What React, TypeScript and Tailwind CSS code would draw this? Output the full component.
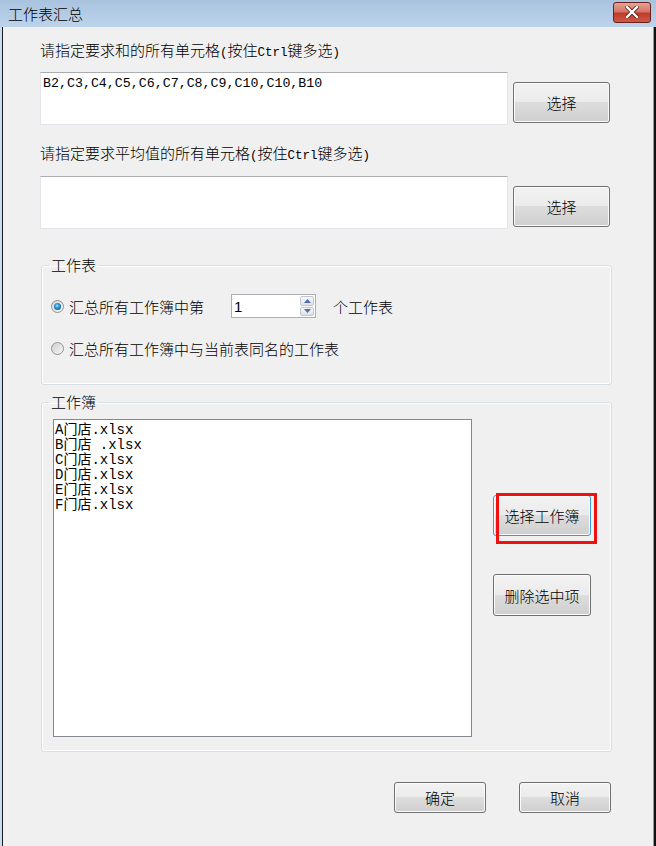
import type { ReactNode } from "react"

const btnBase =
  "flex items-center justify-center rounded-[3px] border bg-[linear-gradient(#f2f2f2,#ebebeb_50%,#dddddd_50%,#cfcfcf)] shadow-[inset_0_0_0_1px_#fbfbfb] text-[15px] font-light leading-none text-black"

function WinButton({ children, className = "", focused = false }: { children: ReactNode; className?: string; focused?: boolean }) {
  return (
    <button className={`${btnBase} ${focused ? "border-[#3c9bd6] shadow-[inset_0_0_0_1px_#a9dcf6]" : "border-[#707070]"} ${className}`}>
      {children}
    </button>
  )
}

function Radio({ checked }: { checked?: boolean }) {
  return (
    <span className="flex h-[13px] w-[13px] items-center justify-center rounded-full border border-[#8e8f8f] bg-[linear-gradient(135deg,#d6d6d6,#f8f8f8)]">
      {checked ? (
        <span className="h-[7px] w-[7px] rounded-full bg-[radial-gradient(circle_at_45%_40%,#a8e4ff_0,#2b9ad6_35%,#0a4c86_90%)]" />
      ) : (
        <span className="h-[9px] w-[9px] rounded-full bg-[linear-gradient(135deg,#cfcfcf,#f4f4f4)]" />
      )}
    </span>
  )
}

function TextBox({ children }: { children?: ReactNode }) {
  return (
    <div className="h-[53px] w-[468px] border border-[#e2e6ea] border-t-[#abadb3] bg-white pl-[2px] pt-[3px] font-['Liberation_Mono','Noto_Sans_CJK_SC',monospace] text-[13.3px] leading-[15px] text-black">
      {children}
    </div>
  )
}

// half-width latin runs in the labels are monospaced
function Mono({ children }: { children: ReactNode }) {
  return <span className="font-['Liberation_Mono',monospace] text-[12.5px] leading-none">{children}</span>
}

function CellLabel({ what }: { what: string }) {
  return (
    <div className="ml-[37px] h-[18px] whitespace-nowrap text-[15px] font-light leading-[18px]">
      请指定要求{what}的所有单元格<Mono>(</Mono>按住<Mono>Ctrl</Mono>键多选<Mono>)</Mono>
    </div>
  )
}

const files = ["A门店.xlsx", "B门店 .xlsx", "C门店.xlsx", "D门店.xlsx", "E门店.xlsx", "F门店.xlsx"]

export default function App() {
  return (
    <div className="flex h-[846px] w-[656px] flex-col overflow-hidden bg-[#f0f0f0] font-['Noto_Sans_CJK_SC',sans-serif] text-black">
      {/* title bar */}
      <div className="flex h-[27px] shrink-0 items-center bg-[linear-gradient(#a9c3df,#bcd3eb)]">
        <span className="pl-[8px] text-[15px] font-light leading-none">工作表汇总</span>
        <div className="ml-auto mr-[5px] mt-[-3px] flex h-[21px] w-[38px] items-center justify-center rounded-[3px] border border-[#6a2119] bg-[linear-gradient(#e6a497,#d47565_45%,#c13c2b_55%,#cb5a48)]">
          <svg width="14" height="12" viewBox="0 0 14 12">
            <path d="M2 1 L12 11 M12 1 L2 11" stroke="#5a2019" strokeWidth="4" strokeLinecap="square" />
            <path d="M2 1 L12 11 M12 1 L2 11" stroke="#ffffff" strokeWidth="2.4" strokeLinecap="square" />
          </svg>
        </div>
      </div>

      <div className="flex flex-1">
        <div className="w-[2px] bg-[#c9dbee]" />
        <div className="w-[1px] bg-[#1b1b1b]" />

        <div className="flex w-[650px] flex-col">
          <div className="mt-[14px]">
            <CellLabel what="和" />
          </div>
          <div className="ml-[37px] mt-[13px] flex items-start gap-[5px]">
            <TextBox>B2,C3,C4,C5,C6,C7,C8,C9,C10,C10,B10</TextBox>
            <WinButton className="mt-[10px] h-[41px] w-[97px]">选择</WinButton>
          </div>

          <div className="mt-[19px]">
            <CellLabel what="平均值" />
          </div>
          <div className="ml-[37px] mt-[14px] flex items-start gap-[5px]">
            <TextBox />
            <WinButton className="mt-[10px] h-[41px] w-[97px]">选择</WinButton>
          </div>

          {/* 工作表 group */}
          <fieldset className="ml-[38px] mt-[27px] w-[571px] rounded-[3px] border border-[#d5dfe5] pb-[27px] shadow-[inset_0_0_0_1px_#ffffff]">
            <legend className="ml-[7px] px-[2px] text-[15px] font-light leading-[18px]">工作表</legend>
            <div className="ml-[9px] mt-[20px] flex h-[24px] items-center">
              <Radio checked />
              <span className="ml-[5px] text-[15px] font-light leading-none">汇总所有工作簿中第</span>
              <div className="ml-[27px] flex h-[24px] w-[85px] items-center border border-[#abadb3] bg-white pr-[1px]">
                <span className="ml-[2px] font-['Liberation_Sans',sans-serif] text-[15px] leading-none">1</span>
                <div className="ml-auto flex h-[20px] w-[14px] flex-col gap-[1px]">
                  <div className="flex flex-1 items-center justify-center rounded-[2px] border border-[#c2c7cf] bg-[linear-gradient(#f6f7f9,#dde2e9)]">
                    <svg width="7" height="4" viewBox="0 0 7 4"><path d="M0 4 L3.5 0 L7 4 Z" fill="#4e6fae" /></svg>
                  </div>
                  <div className="flex flex-1 items-center justify-center rounded-[2px] border border-[#c2c7cf] bg-[linear-gradient(#f6f7f9,#dde2e9)]">
                    <svg width="7" height="4" viewBox="0 0 7 4"><path d="M0 0 L7 0 L3.5 4 Z" fill="#4e6fae" /></svg>
                  </div>
                </div>
              </div>
              <span className="ml-[17px] text-[15px] font-light leading-none">个工作表</span>
            </div>
            <div className="ml-[9px] mt-[21px] flex h-[18px] items-center">
              <Radio />
              <span className="ml-[5px] text-[15px] font-light leading-none">汇总所有工作簿中与当前表同名的工作表</span>
            </div>
          </fieldset>

          {/* 工作簿 group */}
          <fieldset className="ml-[38px] mt-[8px] w-[571px] rounded-[3px] border border-[#d5dfe5] pb-[14px] shadow-[inset_0_0_0_1px_#ffffff]">
            <legend className="ml-[7px] px-[2px] text-[15px] font-light leading-[18px]">工作簿</legend>
            <div className="ml-[11px] mt-[8px] flex items-start">
              <div className="h-[318px] w-[419px] border border-[#828790] bg-white pl-[1px] pt-[3px] font-['Liberation_Mono','Noto_Sans_CJK_SC',monospace] text-[14px] leading-[15px]">
                {files.map((f) => (
                  <div key={f} className="h-[15px] whitespace-pre">{f}</div>
                ))}
              </div>
              <div className="ml-[21px] flex flex-col">
                <div className="relative mt-[76px]">
                  <WinButton focused className="h-[41px] w-[98px]">选择工作簿</WinButton>
                  <div className="absolute left-[3px] top-[-2px] h-[51px] w-[101px] border-[3px] border-[#f01010]" />
                </div>
                <WinButton className="mt-[38px] h-[42px] w-[98px]">删除选中项</WinButton>
              </div>
            </div>
          </fieldset>

          <div className="mr-[42px] mt-[30px] flex justify-end gap-[33px]">
            <WinButton className="h-[31px] w-[92px]">确定</WinButton>
            <WinButton className="h-[31px] w-[92px]">取消</WinButton>
          </div>
        </div>

        <div className="w-[1px] bg-[#3db4e6]" />
        <div className="w-[2px] bg-[#111111]" />
      </div>
    </div>
  )
}
